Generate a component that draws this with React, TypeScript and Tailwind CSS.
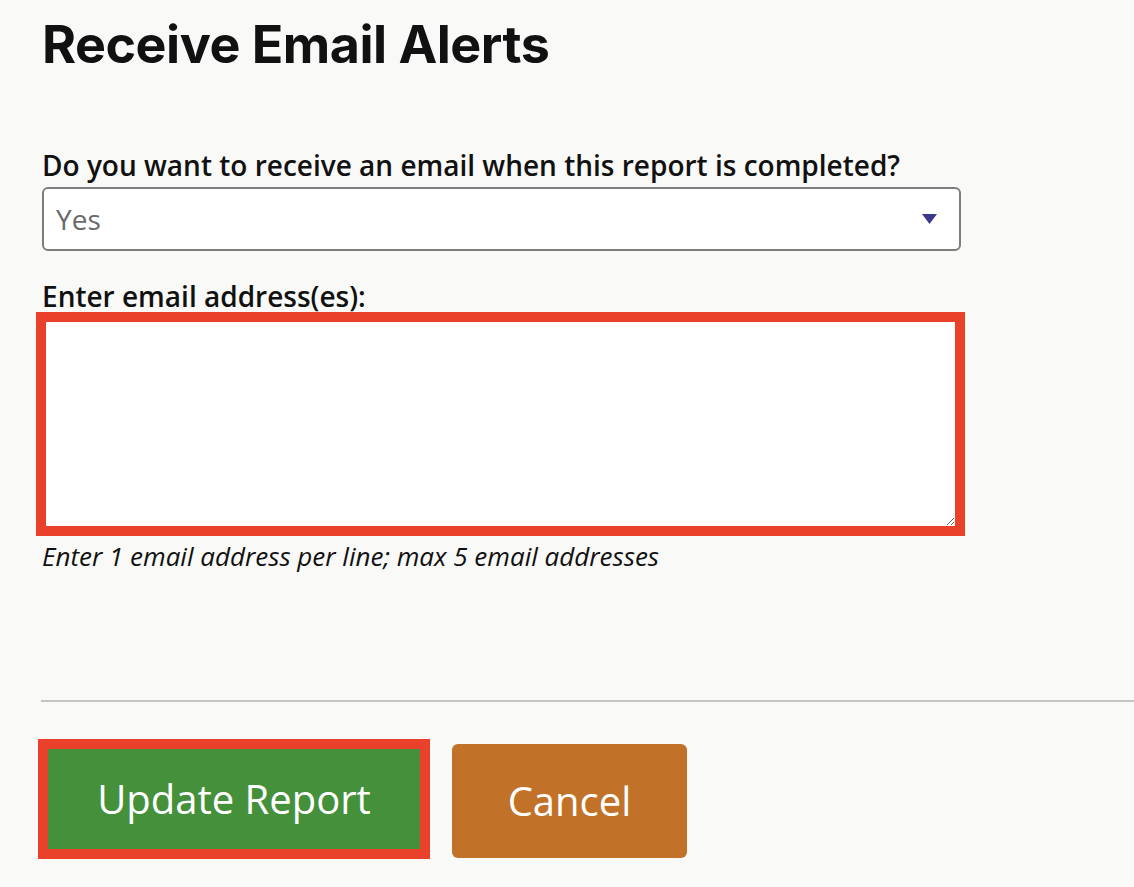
export default function App() {
  return (
    <div className="min-h-screen bg-[#f9f9f8] pt-[13px] pl-[36px] font-['Open_Sans',sans-serif] text-[#111]">
      <h1 className="ml-[6px] text-[52px] leading-[64px] font-bold tracking-[-0.5px] font-['Inter',sans-serif]">
        Receive Email Alerts
      </h1>

      <div className="mt-[70px] ml-[6px] w-[919px]">
        <label className="block text-[28px] leading-[36px] font-semibold">
          Do you want to receive an email when this report is completed?
        </label>
        <div className="relative mt-[4px] h-[64px] rounded-[6px] border-2 border-[#7d7d7d] bg-white">
          <div className="flex h-full items-center pl-[12px] text-[28px] text-[#6a6a6a]">Yes</div>
          <svg className="absolute right-[22px] top-[25px]" width="15" height="10" viewBox="0 0 15 10">
            <path d="M0 0 H15 L7.5 10 Z" fill="#3b3a8a" />
          </svg>
        </div>

        <label className="mt-[29px] block text-[28px] leading-[32px] font-semibold">
          Enter email address(es):
        </label>
      </div>

      <textarea className="block h-[224px] w-[929px] resize border-[10px] border-[#e9412a] bg-white outline-none" />

      <p className="mt-[2px] ml-[6px] text-[26px] leading-[36px] italic">
        Enter 1 email address per line; max 5 email addresses
      </p>

      <hr className="mt-[126px] ml-[5px] border-t-2 border-[#c4c4c4]" />

      <div className="mt-[37px] ml-[2px] flex items-start gap-[22px] pb-[28px]">
        <button className="h-[120px] w-[392px] border-[10px] border-[#e9412a] bg-[#44903b] text-[40px] text-white">
          Update Report
        </button>
        <button className="mt-[5px] h-[114px] w-[235px] rounded-[6px] bg-[#c27228] text-[40px] text-white">
          Cancel
        </button>
      </div>
    </div>
  );
}
